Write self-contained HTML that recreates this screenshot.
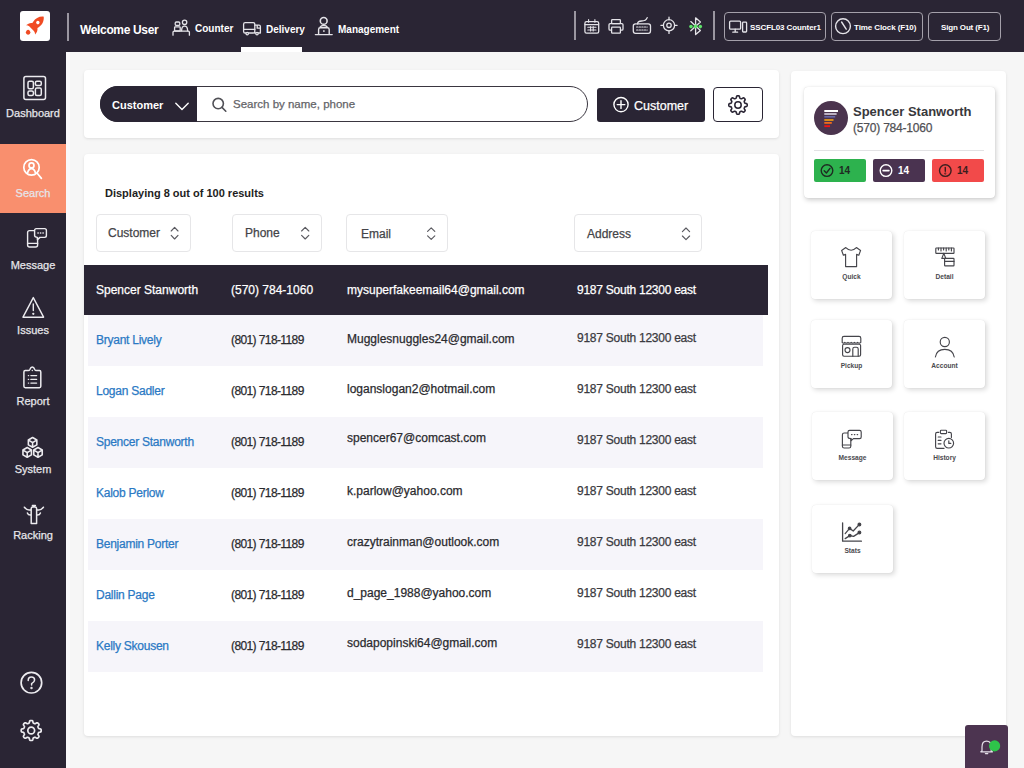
<!DOCTYPE html>
<html><head><meta charset="utf-8">
<style>
*{box-sizing:border-box;margin:0;padding:0}
html,body{width:1024px;height:768px;overflow:hidden}
body{background:#f6f6f6;font-family:"Liberation Sans",sans-serif;color:#2a2a2e;position:relative}
.a{position:absolute}
.t{position:absolute;white-space:nowrap;line-height:1}
.m{-webkit-text-stroke:0.25px currentColor}
svg{position:absolute;overflow:visible}
#hdr{left:0;top:0;width:1024px;height:52px;background:#2a2534}
#side{left:0;top:52px;width:66px;height:716px;background:#2a2534}
.card{position:absolute;background:#fff;border-radius:4px;box-shadow:0 1px 3px rgba(0,0,0,.10)}
.hb{position:absolute;border:1.7px solid #a4a0aa;border-radius:4px;top:12px;height:29px}
.sl{color:#e6e5ea;font-size:11px;text-align:center;width:66px;left:0}
.fb{position:absolute;top:214px;height:38px;border:1px solid #e6e6e8;border-radius:4px;background:#fff}
.fl{font-size:12px;color:#444448}
.row{position:absolute;left:88px;width:675px;height:51px}
.alt{background:#f6f5fa}
.nm{color:#2a79c4;font-size:12px;letter-spacing:-0.25px}
.ph{letter-spacing:-0.6px}
.tx{color:#2a2a2e;font-size:12px}
.tile{position:absolute;width:81px;height:68px;background:#fff;border-radius:4px;box-shadow:2px 2px 5px rgba(0,0,0,.15),0 0 1px rgba(0,0,0,.12)}
.tl{position:absolute;left:0;width:81px;text-align:center;font-size:6.6px;font-weight:bold;color:#4a4a4e;top:41.5px}
</style></head><body>
<div id="hdr" class="a"></div>
<div id="side" class="a"></div>
<div class="a" style="left:66px;top:52px;width:4px;height:716px;background:#faf9fb"></div>

<!-- header -->
<div class="a" style="left:20px;top:11px;width:30px;height:30px;background:#fff;border-radius:3px"></div>
<div class="a" style="left:67px;top:13px;width:1.5px;height:28px;background:#9a96a0"></div>
<div class="t" style="left:80px;top:24px;font-size:12px;font-weight:bold;color:#fff;letter-spacing:-0.35px">Welcome User</div>
<div class="t" style="left:195px;top:24px;font-size:10px;font-weight:bold;color:#fff">Counter</div>
<div class="t" style="left:266px;top:25px;font-size:10px;font-weight:bold;color:#fff">Delivery</div>
<div class="t" style="left:338px;top:25px;font-size:10px;font-weight:bold;color:#fff">Management</div>
<div class="a" style="left:241px;top:47px;width:61px;height:5px;background:#fff"></div>
<div class="a" style="left:574px;top:11px;width:1.5px;height:29px;background:#9a96a0"></div>
<div class="a" style="left:713px;top:11px;width:1.5px;height:29px;background:#9a96a0"></div>
<div class="hb" style="left:724px;width:102px"></div>
<div class="hb" style="left:831px;width:92px"></div>
<div class="hb" style="left:928px;width:73px"></div>
<div class="t" style="left:750px;top:23.5px;font-size:8px;letter-spacing:-0.1px;font-weight:bold;color:#fff">SSCFL03 Counter1</div>
<div class="t" style="left:854px;top:23.5px;font-size:8px;letter-spacing:-0.1px;font-weight:bold;color:#fff">Time Clock (F10)</div>
<div class="t" style="left:941px;top:23.5px;font-size:8px;letter-spacing:-0.15px;font-weight:bold;color:#fff">Sign Out (F1)</div>

<!-- sidebar -->
<div class="a" style="left:0;top:144px;width:66px;height:69px;background:#f98f6e"></div>
<div class="t sl m" style="top:108px">Dashboard</div>
<div class="t sl m" style="top:188px">Search</div>
<div class="t sl m" style="top:260px">Message</div>
<div class="t sl m" style="top:325px">Issues</div>
<div class="t sl m" style="top:396px">Report</div>
<div class="t sl m" style="top:464px">System</div>
<div class="t sl m" style="top:530px">Racking</div>

<!-- search card -->
<div class="card" style="left:84px;top:70px;width:695px;height:68px"></div>
<div class="a" style="left:100px;top:86px;width:488px;height:36px;border:1.5px solid #3a3640;border-radius:18px;background:#fff"></div>
<div class="a" style="left:100px;top:86px;width:97px;height:36px;background:#2a2534;border-radius:18px 0 0 18px"></div>
<div class="t" style="left:112px;top:99.5px;font-size:11px;font-weight:bold;color:#fff">Customer</div>
<div class="t m" style="left:233px;top:99.3px;font-size:11.5px;color:#646468">Search by name, phone</div>
<div class="a" style="left:597px;top:88px;width:108px;height:34px;background:#2a2534;border-radius:3px"></div>
<div class="t m" style="left:634px;top:100px;font-size:12.5px;color:#fff">Customer</div>
<div class="a" style="left:713px;top:87px;width:50px;height:35px;border:1.5px solid #2a2534;border-radius:4px;background:#fff"></div>

<!-- results card -->
<div class="card" style="left:84px;top:154px;width:695px;height:582px"></div>
<div class="t" style="left:105px;top:188px;font-size:11px;font-weight:bold;color:#1e1e22">Displaying 8 out of 100 results</div>
<div class="fb" style="left:96px;width:95px"></div>
<div class="fb" style="left:232px;width:90px"></div>
<div class="fb" style="left:346px;width:102px"></div>
<div class="fb" style="left:574px;width:128px"></div>
<div class="t fl m" style="left:108px;top:227px">Customer</div>
<div class="t fl m" style="left:245px;top:227px">Phone</div>
<div class="t fl m" style="left:361px;top:228px">Email</div>
<div class="t fl m" style="left:587px;top:228px">Address</div>

<div class="a" style="left:84px;top:265px;width:684px;height:50px;background:#2a2534"></div>
<div class="t m" style="left:96px;top:284px;font-size:12px;color:#fff">Spencer Stanworth</div>
<div class="t m" style="left:231px;top:284px;font-size:12px;color:#fff">(570) 784-1060</div>
<div class="t m" style="left:347px;top:284px;font-size:12px;color:#fff">mysuperfakeemail64@gmail.com</div>
<div class="t m" style="left:577px;top:284px;font-size:12px;color:#fff;letter-spacing:-0.25px">9187 South 12300 east</div>

<div class="row alt" style="top:315px"></div>
<div class="row alt" style="top:417px"></div>
<div class="row alt" style="top:519px"></div>
<div class="row alt" style="top:621px"></div>

<div class="t nm m" style="left:96px;top:333.8px">Bryant Lively</div>
<div class="t tx ph m" style="left:231px;top:333.8px">(801) 718-1189</div>
<div class="t tx m" style="left:347px;top:333.3px">Mugglesnuggles24@gmail.com</div>
<div class="t tx m" style="left:577px;top:331.5px;letter-spacing:-0.25px;color:#3a3a40">9187 South 12300 east</div>
<div class="t nm m" style="left:96px;top:384.9px">Logan Sadler</div>
<div class="t tx ph m" style="left:231px;top:384.9px">(801) 718-1189</div>
<div class="t tx m" style="left:347px;top:382.5px">loganslogan2@hotmail.com</div>
<div class="t tx m" style="left:577px;top:382.5px;letter-spacing:-0.25px;color:#3a3a40">9187 South 12300 east</div>
<div class="t nm m" style="left:96px;top:436.2px">Spencer Stanworth</div>
<div class="t tx ph m" style="left:231px;top:436.2px">(801) 718-1189</div>
<div class="t tx m" style="left:347px;top:431.7px">spencer67@comcast.com</div>
<div class="t tx m" style="left:577px;top:433.5px;letter-spacing:-0.25px;color:#3a3a40">9187 South 12300 east</div>
<div class="t nm m" style="left:96px;top:487.0px">Kalob Perlow</div>
<div class="t tx ph m" style="left:231px;top:487.0px">(801) 718-1189</div>
<div class="t tx m" style="left:347px;top:484.8px">k.parlow@yahoo.com</div>
<div class="t tx m" style="left:577px;top:484.5px;letter-spacing:-0.25px;color:#3a3a40">9187 South 12300 east</div>
<div class="t nm m" style="left:96px;top:537.7px">Benjamin Porter</div>
<div class="t tx ph m" style="left:231px;top:537.7px">(801) 718-1189</div>
<div class="t tx m" style="left:347px;top:536.4px">crazytrainman@outlook.com</div>
<div class="t tx m" style="left:577px;top:535.5px;letter-spacing:-0.25px;color:#3a3a40">9187 South 12300 east</div>
<div class="t nm m" style="left:96px;top:588.8px">Dallin Page</div>
<div class="t tx ph m" style="left:231px;top:588.8px">(801) 718-1189</div>
<div class="t tx m" style="left:347px;top:587.1px">d_page_1988@yahoo.com</div>
<div class="t tx m" style="left:577px;top:586.5px;letter-spacing:-0.25px;color:#3a3a40">9187 South 12300 east</div>
<div class="t nm m" style="left:96px;top:639.5px">Kelly Skousen</div>
<div class="t tx ph m" style="left:231px;top:639.5px">(801) 718-1189</div>
<div class="t tx m" style="left:347px;top:637.4px">sodapopinski64@gmail.com</div>
<div class="t tx m" style="left:577px;top:637.5px;letter-spacing:-0.25px;color:#3a3a40">9187 South 12300 east</div>

<!-- right panel -->
<div class="card" style="left:791px;top:71px;width:215px;height:665px"></div>
<div class="a" style="left:804px;top:87px;width:191px;height:111px;background:#fff;border-radius:4px;box-shadow:1px 2px 5px rgba(0,0,0,.2),0 0 1px rgba(0,0,0,.15)"></div>
<div class="a" style="left:814px;top:101px;width:34px;height:34px;border-radius:50%;background:#4b344e"></div>
<div class="t" style="left:853px;top:105px;font-size:13px;font-weight:bold;color:#38383c">Spencer Stanworth</div>
<div class="t m" style="left:853px;top:122px;font-size:12px;color:#505054;letter-spacing:-0.2px">(570) 784-1060</div>
<div class="a" style="left:814px;top:150px;width:170px;height:1px;background:#e2e2e4"></div>
<div class="a" style="left:814px;top:159px;width:52px;height:23px;background:#2db24e;border-radius:2px"></div>
<div class="a" style="left:873px;top:159px;width:52px;height:23px;background:#4a3350;border-radius:2px"></div>
<div class="a" style="left:932px;top:159px;width:52px;height:23px;background:#f24a4a;border-radius:2px"></div>

<div class="t" style="left:839px;top:166px;font-size:10px;font-weight:bold;color:#1e2b22">14</div>
<div class="t" style="left:898px;top:166px;font-size:10px;font-weight:bold;color:#fff">14</div>
<div class="t" style="left:957px;top:166px;font-size:10px;font-weight:bold;color:#3a1e1e">14</div>

<div class="tile" style="left:811px;top:231px"><div class="tl">Quick</div></div>
<div class="tile" style="left:904px;top:231px"><div class="tl">Detail</div></div>
<div class="tile" style="left:811px;top:320px"><div class="tl">Pickup</div></div>
<div class="tile" style="left:904px;top:320px"><div class="tl">Account</div></div>
<div class="tile" style="left:812px;top:412px"><div class="tl">Message</div></div>
<div class="tile" style="left:904px;top:412px"><div class="tl">History</div></div>
<div class="tile" style="left:812px;top:505px"><div class="tl">Stats</div></div>

<div class="a" style="left:965px;top:725px;width:43px;height:43px;background:#4c3450;border-radius:3px 3px 0 0"></div>
<!--ICONS--><svg width="1024" height="768" style="left:0;top:0" viewBox="0 0 1024 768" fill="none" stroke-linecap="round" stroke-linejoin="round">
<!-- rocket -->
<g transform="translate(35.6,24.8) rotate(45)" fill="#f04b23" stroke="none">
<path d="M0 -11.5 C3.6 -8.5 4.6 -4.5 3.9 -0.5 L3.6 1 C5.6 2.5 6.4 4.5 6.4 7.2 C5.2 6 4 5.6 2.8 5.6 L-2.8 5.6 C-4 5.6 -5.2 6 -6.4 7.2 C-6.4 4.5 -5.6 2.5 -3.6 1 L-3.9 -0.5 C-4.6 -4.5 -3.6 -8.5 0 -11.5 Z"/>
<circle cx="0" cy="-3.2" r="1.7" fill="#fff"/>
<circle cx="0" cy="10.6" r="2.3"/>
</g>
<!-- header icons -->
<g stroke="#e4e3e8" stroke-width="1.3">
<path d="M173 35.2 V32.3 Q173 31.2 174.2 31.2 H188.3 Q189.4 31.2 189.4 32.3 V35.2"/>
<circle cx="184.6" cy="22.3" r="2.2"/>
<path d="M181.6 30.8 Q181.6 26.2 184.6 26.2 Q187.6 26.2 187.6 30.8"/>
<rect x="174.6" y="26.8" width="5.6" height="4.2" rx="0.6"/>
<rect x="175.2" y="22" width="4.6" height="3.4" rx="1.2"/>
<rect x="243.6" y="22.6" width="11.2" height="10.4" rx="1.6"/>
<path d="M243.6 29.4 H254.8 M254.8 25.2 H259 Q260.4 25.2 260.4 26.6 V33 H254.8 M257.2 25.2 V28.2 H260.4"/>
<circle cx="247.2" cy="33.6" r="1.2" fill="#2a2534"/>
<circle cx="257" cy="33.6" r="1.2" fill="#2a2534"/>
<circle cx="323.7" cy="20.9" r="3.4" stroke-width="1.6"/>
<path d="M320.2 27 Q321 25.4 323.7 25.4 Q326.4 25.4 327.2 27" stroke-width="1.5"/>
<path d="M318.6 34 V29.4 Q318.6 27.8 320.2 27.8 H327.6 Q329.2 27.8 329.2 29.4 V34 M315.4 34.6 H332.2 M323.9 30.6 V31.4" stroke-width="1.4"/>
<rect x="584.9" y="21.6" width="13.8" height="11.5" rx="1.6"/>
<path d="M585 24.6 H598.6 M588.6 19.6 V22.2 M594.9 19.6 V22.2 M587.8 27.2 H596 M587.8 30 H596 M590.6 26.5 V31 M593.2 26.5 V31" stroke-width="1.1"/>
<rect x="611.6" y="19.6" width="8.8" height="4" rx="0.8"/>
<path d="M611 30.2 H610.2 Q609 30.2 609 29 V24.8 Q609 23.6 610.2 23.6 H621.8 Q623 23.6 623 24.8 V29 Q623 30.2 621.8 30.2 H621"/>
<rect x="611.6" y="27.2" width="8.8" height="6" rx="0.8"/>
<rect x="633.3" y="23.9" width="17.2" height="9.4" rx="2.2"/>
<path d="M637.6 23.9 Q637.6 21 641.5 21 Q646 21 647.2 17.6"/>
<path d="M636.6 27 H647.2 M636.6 30 H647.2" stroke-width="1.2" stroke-dasharray="1.3 1.3"/>
<circle cx="669" cy="25.3" r="5.6"/>
<circle cx="669" cy="25.3" r="2.2"/>
<path d="M669 17.2 V19.7 M669 30.9 V33.4 M660.9 25.3 H663.4 M674.6 25.3 H677.1"/>
<path d="M690.8 21.6 L700.4 30.4 L695.6 34.6 V17.8 L700.4 22 L690.8 30.8"/>
<rect x="729.6" y="21.2" width="11" height="8" rx="1"/>
<path d="M732.8 32.2 H737.6 M735.2 29.2 V32.2"/>
<rect x="742.6" y="22.2" width="4" height="9.8" rx="0.8"/>
<circle cx="843" cy="26.2" r="7.4" stroke-width="1.4"/>
<path d="M841.6 22 L846.2 29.2" stroke-width="1.4"/>
</g>
<g fill="#5ee36a" stroke="none">
<circle cx="691" cy="26.6" r="1.8"/><circle cx="700.3" cy="26.6" r="1.8"/><circle cx="695.6" cy="26.3" r="1.9"/>
</g>
<!-- sidebar icons -->
<g stroke="#ecebef" stroke-width="1.5">
<rect x="23.9" y="76.5" width="21.6" height="23" rx="2"/>
<rect x="28" y="81.3" width="5.4" height="7.4" rx="1.5"/>
<rect x="35.4" y="81.3" width="5.9" height="4.1" rx="1.5"/>
<rect x="28" y="90.9" width="5.4" height="4.6" rx="1.5"/>
<rect x="35.4" y="88" width="5.9" height="7.5" rx="1.5"/>
</g>
<g stroke="#fff" stroke-width="1.7">
<circle cx="31.5" cy="167.4" r="7.7"/>
<path d="M37.2 173.2 L41.4 178.4"/>
<circle cx="31.5" cy="165.4" r="2.5"/>
<path d="M27.6 172.8 Q28.6 168.6 31.5 168.6 Q34.4 168.6 35.4 172.8"/>
</g>
<g stroke="#ecebef" stroke-width="1.4">
<rect x="27.6" y="230.6" width="10" height="16.4" rx="2"/>
<path d="M27.6 243.4 H37.6"/>
<path d="M36.4 228.6 H44.6 Q46.4 228.6 46.4 230.4 V235.6 Q46.4 237.4 44.6 237.4 H40 L37.4 239.6 V237.4 Q34.6 237.2 34.6 235.6 V230.4 Q34.6 228.6 36.4 228.6 Z" fill="#2a2534"/>
<path d="M38 233 H38.2 M40.5 233 H40.7 M43 233 H43.2" stroke-width="1.6"/>
<path d="M33.3 297.6 L43.6 317.2 H23 Z"/>
<path d="M33.3 304 V310.6"/>
<circle cx="33.3" cy="313.8" r="0.5" stroke-width="1.3"/>
<path d="M23.9 372 Q23.9 370.6 25.3 370.6 H28.2 Q29.4 370.6 30 369.2 Q30.7 367.1 32.3 367.1 Q33.9 367.1 34.6 369.2 Q35.2 370.6 36.4 370.6 H39.4 Q40.8 370.6 40.8 372 V386.3 Q40.8 387.7 39.4 387.7 H25.3 Q23.9 387.7 23.9 386.3 Z" stroke-width="1.5"/>
<path d="M32.3 370.4 V370.6 M28.4 375.6 H28.6 M30.9 375.6 H36.6 M28.4 379.4 H28.6 M30.9 379.4 H36.6 M28.4 383.1 H28.6 M30.9 383.1 H36.6" stroke-width="1.4"/>
<path d="M32.6 437.5 L36.84 439.95 V444.85 L32.6 447.29999999999995 L28.36 444.85 V439.95 Z M28.96 440.35 L32.6 442.70 L36.24 440.35 M32.6 442.70 V446.70" stroke-width="1.6"/>
<path d="M27.2 447.5 L31.44 449.95 V454.85 L27.2 457.29999999999995 L22.96 454.85 V449.95 Z M23.56 450.35 L27.2 452.70 L30.84 450.35 M27.2 452.70 V456.70" stroke-width="1.6"/>
<path d="M38 447.5 L42.24 449.95 V454.85 L38 457.29999999999995 L33.76 454.85 V449.95 Z M34.36 450.35 L38 452.70 L41.64 450.35 M38 452.70 V456.70" stroke-width="1.6"/>
<path d="M31.2 523.4 V508.6 Q31.2 507 32.8 507 H35 Q36.6 507 36.6 508.6 V523.4 Z M31.2 509.6 Q27.4 511.2 24.4 507.2 M36.6 509.6 Q40.4 511.2 43.4 507.2 M31.2 515 Q28.2 515.4 27.4 513 M36.6 515 Q39.6 515.4 40.4 513 M32.4 505.4 H35.4" stroke-width="1.5"/>
<circle cx="31.4" cy="682.7" r="10.3" stroke-width="1.7"/>
<path d="M28.2 680.4 Q28.2 677 31.4 677 Q34.6 677 34.6 680 Q34.6 682 31.6 683.6 V685" stroke-width="1.5"/>
<circle cx="31.5" cy="688" r="0.5" stroke-width="1.4"/>
<path d="M41.20 730.50 L41.19 730.76 L41.17 731.02 L41.13 731.28 L41.05 731.54 L40.90 731.78 L40.61 731.99 L40.13 732.15 L39.54 732.27 L39.05 732.38 L38.75 732.52 L38.58 732.68 L38.46 732.86 L38.38 733.04 L38.30 733.22 L38.22 733.41 L38.15 733.59 L38.07 733.78 L38.01 733.97 L37.96 734.17 L37.97 734.41 L38.08 734.72 L38.35 735.14 L38.68 735.64 L38.91 736.10 L38.96 736.46 L38.90 736.73 L38.78 736.97 L38.62 737.18 L38.45 737.38 L38.27 737.57 L38.08 737.75 L37.88 737.92 L37.67 738.08 L37.43 738.20 L37.16 738.26 L36.80 738.21 L36.34 737.98 L35.84 737.65 L35.42 737.38 L35.11 737.27 L34.87 737.26 L34.67 737.31 L34.48 737.37 L34.29 737.45 L34.11 737.52 L33.92 737.60 L33.74 737.68 L33.56 737.76 L33.38 737.88 L33.22 738.05 L33.08 738.35 L32.97 738.84 L32.85 739.43 L32.69 739.91 L32.48 740.20 L32.24 740.35 L31.98 740.43 L31.72 740.47 L31.46 740.49 L31.20 740.50 L30.94 740.49 L30.68 740.47 L30.42 740.43 L30.16 740.35 L29.92 740.20 L29.71 739.91 L29.55 739.43 L29.43 738.84 L29.32 738.35 L29.18 738.05 L29.02 737.88 L28.84 737.76 L28.66 737.68 L28.48 737.60 L28.29 737.52 L28.11 737.45 L27.92 737.37 L27.73 737.31 L27.53 737.26 L27.29 737.27 L26.98 737.38 L26.56 737.65 L26.06 737.98 L25.60 738.21 L25.24 738.26 L24.97 738.20 L24.73 738.08 L24.52 737.92 L24.32 737.75 L24.13 737.57 L23.95 737.38 L23.78 737.18 L23.62 736.97 L23.50 736.73 L23.44 736.46 L23.49 736.10 L23.72 735.64 L24.05 735.14 L24.32 734.72 L24.43 734.41 L24.44 734.17 L24.39 733.97 L24.33 733.78 L24.25 733.59 L24.18 733.41 L24.10 733.22 L24.02 733.04 L23.94 732.86 L23.82 732.68 L23.65 732.52 L23.35 732.38 L22.86 732.27 L22.27 732.15 L21.79 731.99 L21.50 731.78 L21.35 731.54 L21.27 731.28 L21.23 731.02 L21.21 730.76 L21.20 730.50 L21.21 730.24 L21.23 729.98 L21.27 729.72 L21.35 729.46 L21.50 729.22 L21.79 729.01 L22.27 728.85 L22.86 728.73 L23.35 728.62 L23.65 728.48 L23.82 728.32 L23.94 728.14 L24.02 727.96 L24.10 727.78 L24.18 727.59 L24.25 727.41 L24.33 727.22 L24.39 727.03 L24.44 726.83 L24.43 726.59 L24.32 726.28 L24.05 725.86 L23.72 725.36 L23.49 724.90 L23.44 724.54 L23.50 724.27 L23.62 724.03 L23.78 723.82 L23.95 723.62 L24.13 723.43 L24.32 723.25 L24.52 723.08 L24.73 722.92 L24.97 722.80 L25.24 722.74 L25.60 722.79 L26.06 723.02 L26.56 723.35 L26.98 723.62 L27.29 723.73 L27.53 723.74 L27.73 723.69 L27.92 723.63 L28.11 723.55 L28.29 723.48 L28.48 723.40 L28.66 723.32 L28.84 723.24 L29.02 723.12 L29.18 722.95 L29.32 722.65 L29.43 722.16 L29.55 721.57 L29.71 721.09 L29.92 720.80 L30.16 720.65 L30.42 720.57 L30.68 720.53 L30.94 720.51 L31.20 720.50 L31.46 720.51 L31.72 720.53 L31.98 720.57 L32.24 720.65 L32.48 720.80 L32.69 721.09 L32.85 721.57 L32.97 722.16 L33.08 722.65 L33.22 722.95 L33.38 723.12 L33.56 723.24 L33.74 723.32 L33.92 723.40 L34.11 723.48 L34.29 723.55 L34.48 723.63 L34.67 723.69 L34.87 723.74 L35.11 723.73 L35.42 723.62 L35.84 723.35 L36.34 723.02 L36.80 722.79 L37.16 722.74 L37.43 722.80 L37.67 722.92 L37.88 723.08 L38.08 723.25 L38.27 723.43 L38.45 723.62 L38.62 723.82 L38.78 724.03 L38.90 724.27 L38.96 724.54 L38.91 724.90 L38.68 725.36 L38.35 725.86 L38.08 726.28 L37.97 726.59 L37.96 726.83 L38.01 727.03 L38.07 727.22 L38.15 727.41 L38.22 727.59 L38.30 727.78 L38.38 727.96 L38.46 728.14 L38.58 728.32 L38.75 728.48 L39.05 728.62 L39.54 728.73 L40.13 728.85 L40.61 729.01 L40.90 729.22 L41.05 729.46 L41.13 729.72 L41.17 729.98 L41.19 730.24 Z" stroke-width="1.7"/>
<circle cx="31.2" cy="730.5" r="3.4" stroke-width="1.7"/>
</g>
<!-- search bar icons -->
<path d="M175.8 103.2 L182 109.4 L188.2 103.2" stroke="#fff" stroke-width="1.4"/>
<g stroke="#505056" stroke-width="1.6">
<circle cx="218.2" cy="103.6" r="5.2"/>
<path d="M222 107.4 L225.8 111.2"/>
</g>
<g stroke="#fff" stroke-width="1.4">
<circle cx="621" cy="104.6" r="7.1"/>
<path d="M621 100.8 V108.4 M617.2 104.6 H624.8"/>
</g>
<path d="M747.20 105.00 L747.19 105.24 L747.17 105.48 L747.14 105.72 L747.06 105.95 L746.93 106.18 L746.66 106.37 L746.21 106.52 L745.67 106.63 L745.23 106.74 L744.95 106.86 L744.79 107.01 L744.69 107.17 L744.61 107.34 L744.54 107.51 L744.47 107.68 L744.40 107.85 L744.33 108.02 L744.27 108.19 L744.23 108.38 L744.23 108.60 L744.34 108.88 L744.58 109.27 L744.89 109.73 L745.09 110.15 L745.14 110.48 L745.08 110.74 L744.97 110.95 L744.83 111.15 L744.67 111.33 L744.51 111.51 L744.33 111.67 L744.15 111.83 L743.95 111.97 L743.74 112.08 L743.48 112.14 L743.15 112.09 L742.73 111.89 L742.27 111.58 L741.88 111.34 L741.60 111.23 L741.38 111.23 L741.19 111.27 L741.02 111.33 L740.85 111.40 L740.68 111.47 L740.51 111.54 L740.34 111.61 L740.17 111.69 L740.01 111.79 L739.86 111.95 L739.74 112.23 L739.63 112.67 L739.52 113.21 L739.37 113.66 L739.18 113.93 L738.95 114.06 L738.72 114.14 L738.48 114.17 L738.24 114.19 L738.00 114.20 L737.76 114.19 L737.52 114.17 L737.28 114.14 L737.05 114.06 L736.82 113.93 L736.63 113.66 L736.48 113.21 L736.37 112.67 L736.26 112.23 L736.14 111.95 L735.99 111.79 L735.83 111.69 L735.66 111.61 L735.49 111.54 L735.32 111.47 L735.15 111.40 L734.98 111.33 L734.81 111.27 L734.62 111.23 L734.40 111.23 L734.12 111.34 L733.73 111.58 L733.27 111.89 L732.85 112.09 L732.52 112.14 L732.26 112.08 L732.05 111.97 L731.85 111.83 L731.67 111.67 L731.49 111.51 L731.33 111.33 L731.17 111.15 L731.03 110.95 L730.92 110.74 L730.86 110.48 L730.91 110.15 L731.11 109.73 L731.42 109.27 L731.66 108.88 L731.77 108.60 L731.77 108.38 L731.73 108.19 L731.67 108.02 L731.60 107.85 L731.53 107.68 L731.46 107.51 L731.39 107.34 L731.31 107.17 L731.21 107.01 L731.05 106.86 L730.77 106.74 L730.33 106.63 L729.79 106.52 L729.34 106.37 L729.07 106.18 L728.94 105.95 L728.86 105.72 L728.83 105.48 L728.81 105.24 L728.80 105.00 L728.81 104.76 L728.83 104.52 L728.86 104.28 L728.94 104.05 L729.07 103.82 L729.34 103.63 L729.79 103.48 L730.33 103.37 L730.77 103.26 L731.05 103.14 L731.21 102.99 L731.31 102.83 L731.39 102.66 L731.46 102.49 L731.53 102.32 L731.60 102.15 L731.67 101.98 L731.73 101.81 L731.77 101.62 L731.77 101.40 L731.66 101.12 L731.42 100.73 L731.11 100.27 L730.91 99.85 L730.86 99.52 L730.92 99.26 L731.03 99.05 L731.17 98.85 L731.33 98.67 L731.49 98.49 L731.67 98.33 L731.85 98.17 L732.05 98.03 L732.26 97.92 L732.52 97.86 L732.85 97.91 L733.27 98.11 L733.73 98.42 L734.12 98.66 L734.40 98.77 L734.62 98.77 L734.81 98.73 L734.98 98.67 L735.15 98.60 L735.32 98.53 L735.49 98.46 L735.66 98.39 L735.83 98.31 L735.99 98.21 L736.14 98.05 L736.26 97.77 L736.37 97.33 L736.48 96.79 L736.63 96.34 L736.82 96.07 L737.05 95.94 L737.28 95.86 L737.52 95.83 L737.76 95.81 L738.00 95.80 L738.24 95.81 L738.48 95.83 L738.72 95.86 L738.95 95.94 L739.18 96.07 L739.37 96.34 L739.52 96.79 L739.63 97.33 L739.74 97.77 L739.86 98.05 L740.01 98.21 L740.17 98.31 L740.34 98.39 L740.51 98.46 L740.68 98.53 L740.85 98.60 L741.02 98.67 L741.19 98.73 L741.38 98.77 L741.60 98.77 L741.88 98.66 L742.27 98.42 L742.73 98.11 L743.15 97.91 L743.48 97.86 L743.74 97.92 L743.95 98.03 L744.15 98.17 L744.33 98.33 L744.51 98.49 L744.67 98.67 L744.83 98.85 L744.97 99.05 L745.08 99.26 L745.14 99.52 L745.09 99.85 L744.89 100.27 L744.58 100.73 L744.34 101.12 L744.23 101.40 L744.23 101.62 L744.27 101.81 L744.33 101.98 L744.40 102.15 L744.47 102.32 L744.54 102.49 L744.61 102.66 L744.69 102.83 L744.79 102.99 L744.95 103.14 L745.23 103.26 L745.67 103.37 L746.21 103.48 L746.66 103.63 L746.93 103.82 L747.06 104.05 L747.14 104.28 L747.17 104.52 L747.19 104.76 Z" stroke="#2a2534" stroke-width="1.6"/>
<circle cx="738" cy="105" r="3.2" stroke="#2a2534" stroke-width="1.5"/>
<!-- sort icons -->
<g stroke="#5a5a60" stroke-width="1.15">
<path d="M171.2 231 L174.6 227.4 L178 231 M171.2 235.4 L174.6 239 L178 235.4"/>
<path d="M301.6 231 L305.2 227.4 L308.8 231 M301.6 235.4 L305.2 239 L308.8 235.4"/>
<path d="M427.6 231.4 L431.2 227.8 L434.8 231.4 M427.6 235.8 L431.2 239.4 L434.8 235.8"/>
<path d="M682.4 231.6 L686 228 L689.6 231.6 M682.4 236 L686 239.6 L689.6 236"/>
</g>
<!-- avatar bars -->
<g stroke="none">
<rect x="824.3" y="110" width="13.7" height="2" fill="#ffffff"/>
<rect x="824.3" y="113.2" width="12.3" height="1.6" fill="#d8d0e0"/>
<rect x="824.3" y="116" width="10.9" height="1.6" fill="#6a6aa8"/>
<rect x="824.3" y="119.2" width="9.2" height="1.6" fill="#f6a313"/>
<rect x="824.3" y="122" width="7.5" height="1.8" fill="#f06a1c"/>
<rect x="824.3" y="125.2" width="5.7" height="1.9" fill="#f01414"/>
</g>
<!-- badges icons -->
<g stroke-width="1.4">
<circle cx="827" cy="170.6" r="5.8" stroke="#1e2b22"/>
<path d="M824.2 170.8 L826.4 173 L830 168.4" stroke="#1e2b22"/>
<circle cx="886" cy="170.6" r="5.8" stroke="#fff"/>
<path d="M883.2 170.6 H888.8" stroke="#fff" stroke-width="1.8"/>
<circle cx="945.3" cy="170.6" r="5.8" stroke="#3a1e1e"/>
<path d="M945.3 167.4 V171.2" stroke="#3a1e1e"/>
<circle cx="945.3" cy="173.6" r="0.3" stroke="#3a1e1e"/>
</g>
<!-- tile icons -->
<g stroke="#45454b" stroke-width="1.15">
<path d="M845.8 247.6 L841.6 250.4 L843.4 255.2 L845.6 254.4 V266.6 H856.6 V254.4 L858.8 255.2 L860.6 250.4 L856.4 247.6 Q853.8 250.2 851.1 250.2 Q848.4 250.2 845.8 247.6 Z"/>
<rect x="935.8" y="248" width="18.2" height="5.4" rx="0.6"/>
<path d="M938.4 248 V250 M941 248 V251 M943.6 248 V250 M946.2 248 V251 M948.8 248 V250 M951.4 248 V251"/>
<rect x="944.6" y="258.4" width="9.4" height="7.4" rx="0.6"/>
<path d="M944.6 261.4 H954 M943.8 253.4 L941.8 258.4 H945.8 Z"/>
<path d="M842.2 342.4 V338.2 Q842.2 336.4 844 336.4 H859 Q860.8 336.4 860.8 338.2 V342.4 Q859.2 343.8 857.6 342.4 Q856 343.8 854.4 342.4 Q852.8 343.8 851.2 342.4 Q849.6 343.8 848 342.4 Q846.4 343.8 844.8 342.4 Q843.4 343.8 842.2 342.4"/>
<rect x="842.6" y="344.2" width="18" height="12" rx="1.4"/>
<rect x="845" y="347.6" width="5" height="5" rx="2.5"/>
<path d="M852.8 356.2 V349 Q852.8 347.2 854.6 347.2 H856.4 Q858.2 347.2 858.2 349 V356.2"/>
<circle cx="944.8" cy="342" r="4.6"/>
<path d="M935.4 357 Q936.6 349.4 944.8 349.4 Q953 349.4 954.2 357"/>
<rect x="842.4" y="433" width="8.4" height="15" rx="1.8"/>
<path d="M842.4 445 H850.8"/>
<path d="M849.6 430.4 H859.6 Q861.2 430.4 861.2 432 V437 Q861.2 438.6 859.6 438.6 H853.4 L851.2 440.6 V438.6 Q848 438.6 848 437 V432 Q848 430.4 849.6 430.4 Z" fill="#fff"/>
<path d="M851.6 434.6 H852 M854.4 434.6 H854.8 M857.2 434.6 H857.6" stroke-width="1.3"/>
<path d="M938.8 432.4 H937.2 Q935.6 432.4 935.6 434 V446.8 Q935.6 448.4 937.2 448.4 H944"/>
<path d="M948.4 432.4 H949.8 Q951.4 432.4 951.4 434 V437.4"/>
<rect x="940.4" y="430.2" width="6.2" height="3.4" rx="0.8"/>
<path d="M938.2 437 H941 M938.2 440.4 H941 M938.2 443.8 H941"/>
<circle cx="948.8" cy="443.2" r="4.8" fill="#fff"/>
<path d="M948.8 440.8 V443.4 H950.8"/>
<path d="M842.6 522.8 V541.2 H861.4" stroke-width="1.3"/>
<path d="M845.2 533.6 L849.6 528.4 L853.2 531 L859.4 524.4 M845.2 538.6 L849.8 535.6 L853.6 536.4 L859.4 532.6" stroke-width="1.3"/>
<g fill="#3a3a40"><circle cx="849.6" cy="528.4" r="1.3"/><circle cx="859.4" cy="524.4" r="1.4"/><circle cx="849.8" cy="535.6" r="1.3"/><circle cx="859.4" cy="532.6" r="1.4"/></g>
</g>
<!-- bell -->
<path d="M982 751 V747 Q982 741.2 986.6 741.2 Q991.2 741.2 991.2 747 V751 L992.4 751.8 H980.8 Z M985.4 753.6 H987.8" stroke="#e6e0ea" stroke-width="1.2"/>
<circle cx="994.6" cy="745.9" r="5.6" fill="#2ec44a"/>
</svg>
<!--/ICONS-->
</body></html>
